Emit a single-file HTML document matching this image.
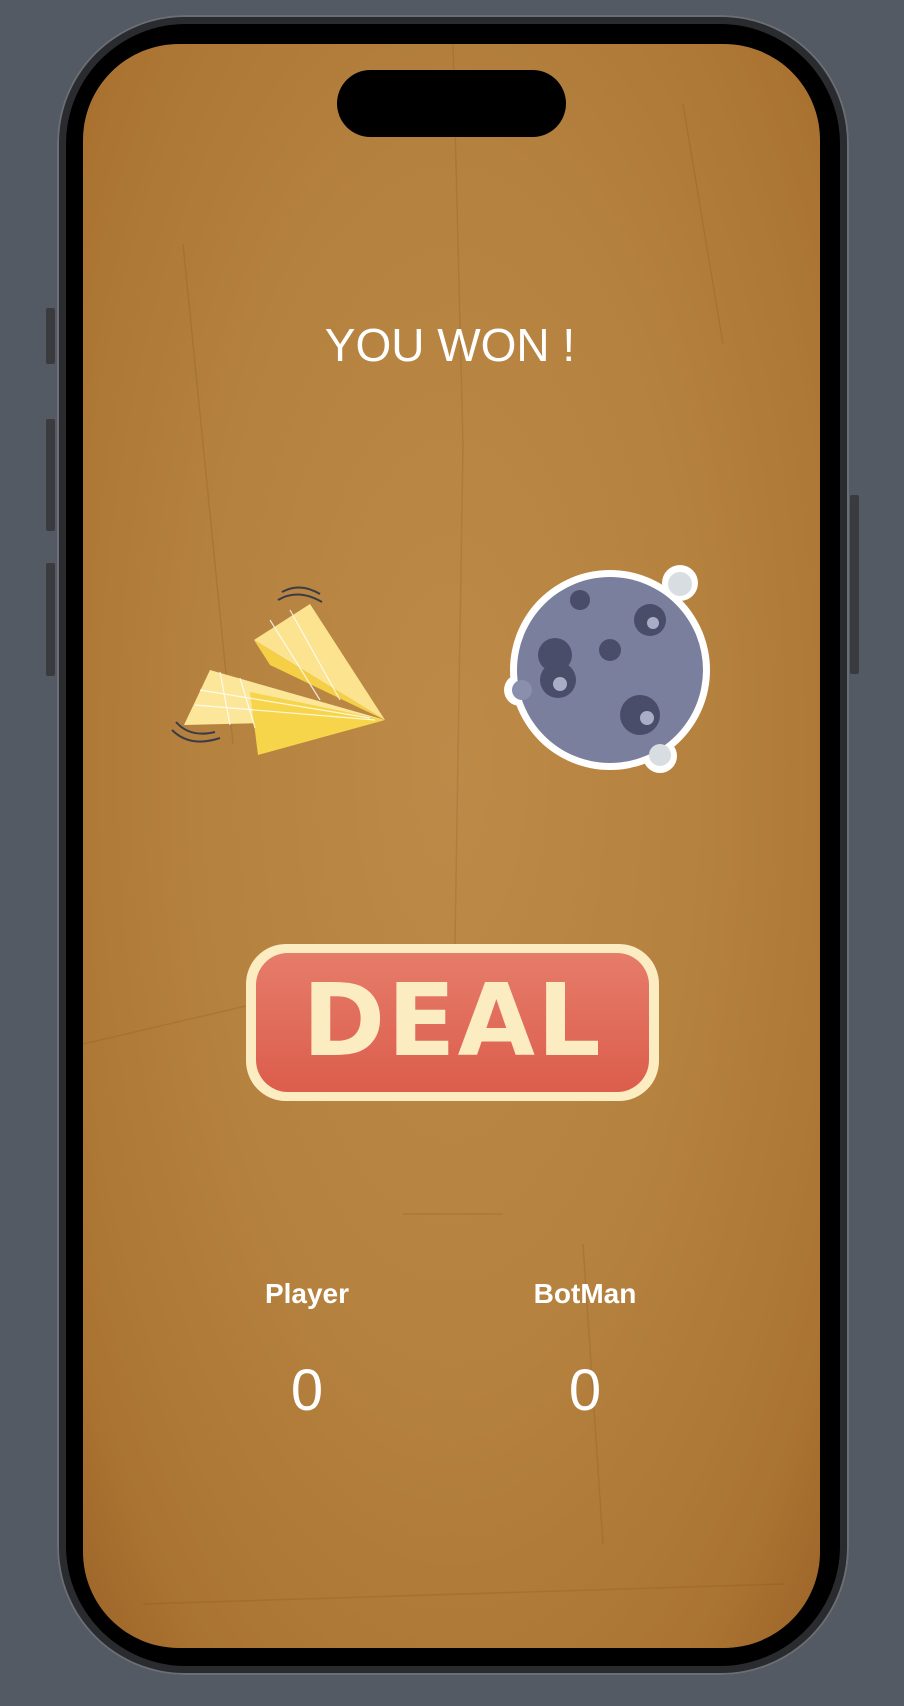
<!DOCTYPE html>
<html><head><meta charset="utf-8"><style>
html,body{margin:0;padding:0;width:904px;height:1706px;background:#545a63;overflow:hidden;font-family:"Liberation Sans",sans-serif}
.abs{position:absolute}
.phone{left:57px;top:15px;width:792px;height:1660px;border-radius:128px;background:#2a2b2e;box-shadow:inset 0 0 0 2px #6b6e74}
.bezel{left:66px;top:24px;width:774px;height:1642px;border-radius:120px;background:#000}
.screen{left:83px;top:44px;width:737px;height:1604px;border-radius:96px;overflow:hidden;
background:radial-gradient(ellipse at 50% 45%,#bd8a48 0%,#b5813f 50%,#aa7331 85%,#9c6428 100%)}
.btn{background:#3a3b3f;width:9px;border-radius:2px}
.island{left:337px;top:70px;width:229px;height:67px;border-radius:34px;background:#000}
.t{color:#fff;text-align:center;position:absolute}
</style></head><body>
<div class="abs btn" style="left:46px;top:308px;height:56px"></div>
<div class="abs btn" style="left:46px;top:419px;height:112px"></div>
<div class="abs btn" style="left:46px;top:563px;height:113px"></div>
<div class="abs btn" style="left:850px;top:495px;height:179px"></div>
<div class="abs phone"></div>
<div class="abs bezel"></div>
<div class="abs screen">
<svg width="737" height="1604" style="position:absolute;left:0;top:0;opacity:.15">
<g stroke="#6e3f12" stroke-width="1.5" fill="none">
<path d="M370 0 L380 400 L372 900"/><path d="M600 60 L640 300"/><path d="M0 1000 L300 930"/><path d="M320 1170 L420 1170"/><path d="M60 1560 L700 1540"/><path d="M500 1200 L520 1500"/><path d="M100 200 L150 700"/>
</g></svg>
</div>
<div class="abs island"></div>
<div class="t" style="left:250px;width:400px;top:318px;font-size:46px">YOU WON !</div>
<svg class="abs" style="left:170px;top:580px" width="242" height="178" viewBox="0 0 242 178">
<path d="M14 145 L40 90 L215 140 Z" fill="#fbe69a"/>
<path d="M80 112 L88 175 L215 140 Z" fill="#f6d54a"/>
<path d="M84 60 L140 24 L215 140 Z" fill="#fbe390"/>
<path d="M84 60 L100 85 L215 140 Z" fill="#f5cf45"/>
<g stroke="#fff" stroke-width="1.2" opacity=".8"><path d="M30 110 L200 138 M25 125 L205 140 M50 92 L60 145 M70 98 L85 148 M100 40 L150 120 M120 30 L170 120"/></g>
<g stroke="#3b3b48" stroke-width="2" fill="none"><path d="M112 12 Q130 2 150 14 M108 20 Q128 8 152 22"/><path d="M2 150 Q20 168 50 158 M6 142 Q20 158 45 152"/></g>
</svg>
<svg class="abs" style="left:500px;top:560px" width="226" height="218" viewBox="0 0 226 218">
<circle cx="110" cy="110" r="100" fill="#fff"/>
<circle cx="180" cy="23" r="18" fill="#fff"/><circle cx="160" cy="196" r="17" fill="#fff"/><circle cx="20" cy="130" r="16" fill="#fff"/>
<circle cx="110" cy="110" r="93" fill="#7b7f9e"/>
<circle cx="180" cy="24" r="12" fill="#d8dde2"/><circle cx="160" cy="195" r="11" fill="#d8dde2"/><circle cx="22" cy="130" r="10" fill="#8a8fad"/>
<g fill="#4a4d6a"><circle cx="55" cy="95" r="17"/><circle cx="58" cy="120" r="18"/><circle cx="140" cy="155" r="20"/><circle cx="150" cy="60" r="16"/><circle cx="110" cy="90" r="11"/><circle cx="80" cy="40" r="10"/></g>
<g fill="#a9adc6"><circle cx="60" cy="124" r="7"/><circle cx="147" cy="158" r="7"/><circle cx="153" cy="63" r="6"/></g>
</svg>
<div class="abs" style="left:246px;top:944px;width:413px;height:157px;border-radius:40px;background:#fcecc2"></div>
<div class="abs" style="left:256px;top:953px;width:393px;height:139px;border-radius:32px;background:linear-gradient(#e67c6b,#dc5d4b)"></div>
<div class="t" style="left:246px;width:413px;top:962px;font-size:100px;font-weight:bold;color:#fcecc2;font-family:'DejaVu Sans','Liberation Sans',sans-serif;letter-spacing:2px">DEAL</div>
<div class="t" style="left:207px;width:200px;top:1278px;font-size:28px;font-weight:bold">Player</div>
<div class="t" style="left:485px;width:200px;top:1278px;font-size:28px;font-weight:bold">BotMan</div>
<div class="t" style="left:207px;width:200px;top:1357px;font-size:58px">0</div>
<div class="t" style="left:485px;width:200px;top:1357px;font-size:58px">0</div>
</body></html>
